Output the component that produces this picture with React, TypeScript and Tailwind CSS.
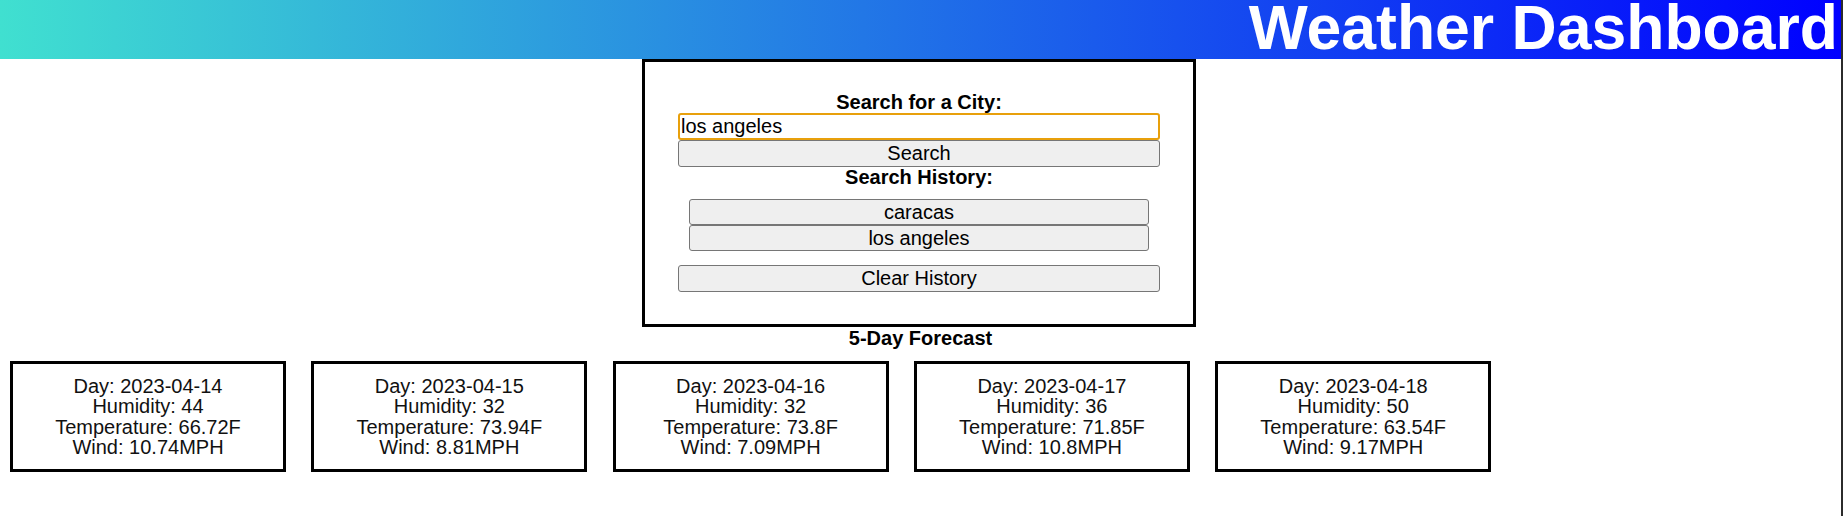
import React from "react";

const days = [
  { day: "2023-04-14", hum: "44", temp: "66.72F", wind: "10.74MPH" },
  { day: "2023-04-15", hum: "32", temp: "73.94F", wind: "8.81MPH" },
  { day: "2023-04-16", hum: "32", temp: "73.8F", wind: "7.09MPH" },
  { day: "2023-04-17", hum: "36", temp: "71.85F", wind: "10.8MPH" },
  { day: "2023-04-18", hum: "50", temp: "63.54F", wind: "9.17MPH" },
];

const btn =
  "block w-full h-[27px] bg-[#efefef] border border-[#767676] rounded-[3px] text-[20px] leading-[23px] text-black text-center";

export default function App() {
  return (
    <div
      className="min-h-screen w-full bg-white border-r-2 border-[#2b2b2b] text-black"
      style={{ fontFamily: '"Liberation Sans", Arial, sans-serif' }}
    >
      <header className="h-[59px] bg-[linear-gradient(to_right,#40e0d0,#0000ff)] text-right pr-[3px]">
        <h1 className="text-[62.5px] leading-[55px] font-bold text-white">Weather Dashboard</h1>
      </header>

      <div className="pr-[3px]">
        <div className="mx-auto w-[554px] border-[3px] border-black px-[33px] pt-[30px] pb-[32px]">
          <div className="text-center text-[20px] font-bold leading-[21px]">Search for a City:</div>
          <div className="h-[27px] w-full border-2 border-[#e8a00c] rounded-[3px] bg-white text-[20px] leading-[23px] pl-[1px] text-left">
            los angeles
          </div>
          <button className={btn}>Search</button>
          <div className="text-center text-[20px] font-bold leading-[21px]">Search History:</div>
          <div className="mx-[11px] mt-[11px] flex flex-col">
            <button className="block w-full h-[26px] bg-[#efefef] border border-[#767676] rounded-[3px] text-[20px] leading-[23px] text-black text-center">
              caracas
            </button>
            <button className="block w-full h-[26px] bg-[#efefef] border border-[#767676] rounded-[3px] text-[20px] leading-[23px] text-black text-center">
              los angeles
            </button>
          </div>
          <div className="mt-[14px]">
            <button className={btn}>Clear History</button>
          </div>
        </div>
      </div>

      <div className="text-center text-[20px] font-bold leading-[23px]">5-Day Forecast</div>

      <div className="flex gap-[25.3px] pl-[10px] mt-[11px]">
        {days.map((d) => (
          <div
            key={d.day}
            className="w-[276px] h-[111px] border-[3px] border-black flex flex-col justify-center text-center text-[20px] leading-[20.5px] text-[#111]"
          >
            <div>Day: {d.day}</div>
            <div>Humidity: {d.hum}</div>
            <div>Temperature: {d.temp}</div>
            <div>Wind: {d.wind}</div>
          </div>
        ))}
      </div>
    </div>
  );
}
